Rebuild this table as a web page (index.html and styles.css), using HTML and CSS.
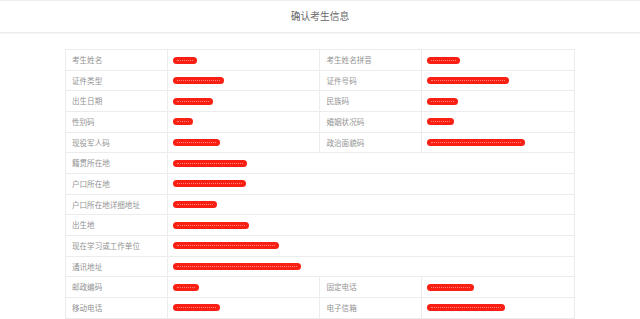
FILE: index.html
```html
<!DOCTYPE html>
<html lang="zh">
<head>
<meta charset="utf-8">
<title>确认考生信息</title>
<link rel="stylesheet" href="styles.css">
</head>
<body>
<header class="topbar"><h1 class="title">确认考生信息</h1></header>
<main class="content">
<table class="info">
<colgroup><col class="c-label"><col class="c-value"><col class="c-label"><col class="c-value"></colgroup>
<tbody>
<tr><th>考生姓名</th><td><span class="redact" style="width:24px"></span></td><th>考生姓名拼音</th><td><span class="redact" style="width:33px"></span></td></tr>
<tr><th>证件类型</th><td><span class="redact" style="width:51px"></span></td><th>证件号码</th><td><span class="redact" style="width:82px"></span></td></tr>
<tr><th>出生日期</th><td><span class="redact" style="width:40px"></span></td><th>民族码</th><td><span class="redact" style="width:31px"></span></td></tr>
<tr><th>性别码</th><td><span class="redact" style="width:20px"></span></td><th>婚姻状况码</th><td><span class="redact" style="width:27px"></span></td></tr>
<tr><th>现役军人码</th><td><span class="redact" style="width:47px"></span></td><th>政治面貌码</th><td><span class="redact" style="width:98px"></span></td></tr>
<tr><th>籍贯所在地</th><td colspan="3"><span class="redact" style="width:74px"></span></td></tr>
<tr><th>户口所在地</th><td colspan="3"><span class="redact" style="width:73px"></span></td></tr>
<tr><th>户口所在地详细地址</th><td colspan="3"><span class="redact" style="width:44px"></span></td></tr>
<tr><th>出生地</th><td colspan="3"><span class="redact" style="width:76px"></span></td></tr>
<tr><th>现在学习或工作单位</th><td colspan="3"><span class="redact" style="width:106px"></span></td></tr>
<tr><th>通讯地址</th><td colspan="3"><span class="redact" style="width:128px"></span></td></tr>
<tr><th>邮政编码</th><td><span class="redact" style="width:26px"></span></td><th>固定电话</th><td><span class="redact" style="width:47px"></span></td></tr>
<tr><th>移动电话</th><td><span class="redact" style="width:47px"></span></td><th>电子信箱</th><td><span class="redact" style="width:78px"></span></td></tr>
</tbody>
</table>
</main>
</body>
</html>
```
FILE: styles.css
```css
html, body {
  margin: 0;
  padding: 0;
  background: #ffffff;
}
body {
  font-family: "Noto Sans CJK SC", "Noto Sans", sans-serif;
  color: #8c8c8c;
}
.topbar {
  height: 31px;
  border-top: 1px solid #eeeeee;
  border-bottom: 1px solid #ebebeb;
  box-shadow: 0 1px 1px rgba(0,0,0,0.03);
  display: flex;
  align-items: center;
  justify-content: center;
}
.title {
  margin: 0;
  font-size: 9.72px;
  font-weight: normal;
  color: #666666;
  line-height: 1;
}
.content {
  padding-top: 16px;
}
.info {
  width: 510px;
  margin: 0 auto;
  border-collapse: collapse;
  table-layout: fixed;
  font-size: 7.56px;
}
.c-label { width: 20%; }
.c-value { width: 30%; }
.info tr {
  height: 20.67px;
}
.info th,
.info td {
  border: 1px solid #ececec;
  padding: 0 0 0 5px;
  text-align: left;
  font-weight: normal;
  vertical-align: middle;
  line-height: 1;
  white-space: nowrap;
}
.info th {
  color: #939393;
  padding-left: 6px;
}
.redact {
  display: inline-block;
  position: relative;
  height: 7px;
  border-radius: 3.5px;
  background: #fa1f13;
  vertical-align: middle;
  margin-top: -2px;
}
.redact::after {
  content: "";
  position: absolute;
  left: 4px;
  right: 4px;
  top: 3px;
  border-top: 1px dotted rgba(255, 200, 195, 0.6);
}
```
